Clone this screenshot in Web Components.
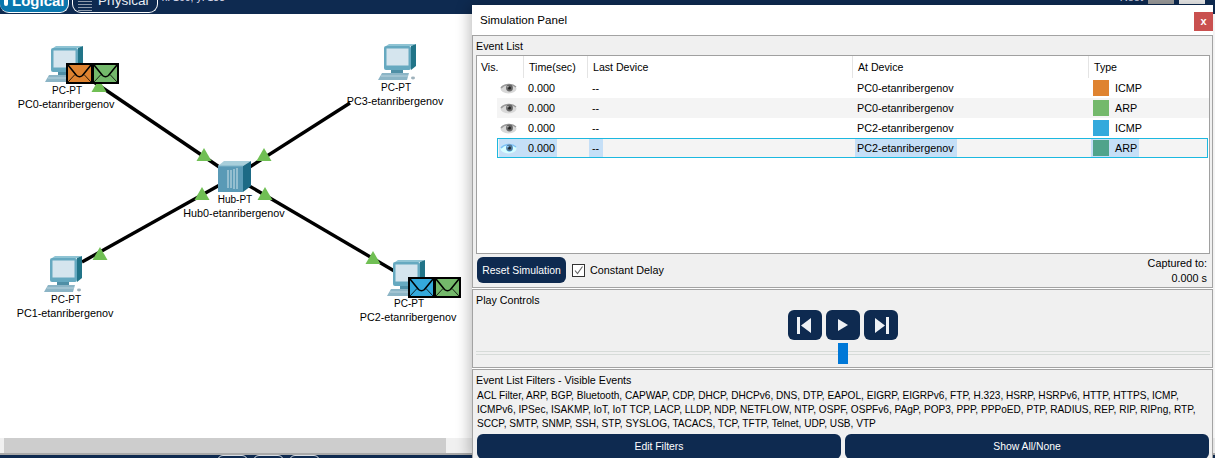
<!DOCTYPE html>
<html>
<head>
<meta charset="utf-8">
<title>Simulation Panel</title>
<style>
  html, body { margin: 0; height: 100%; overflow: hidden; background: #fff; }
  body { font: 10.8px "Liberation Sans", Arial, sans-serif; color: #000; }
</style>
</head>
<body>
<pt-app>
  <pt-topbar slot="top"></pt-topbar>
  <pt-workspace slot="main">
    <pdu-link></pdu-link>
    <pt-node kind="pc" x="45" y="46" cx="66" model="PC-PT" label="PC0-etanribergenov" ly="85"></pt-node>
    <pt-node kind="pc" x="378" y="44" cx="395" model="PC-PT" label="PC3-etanribergenov" ly="82"></pt-node>
    <pt-node kind="pc" x="44" y="256" cx="65" model="PC-PT" label="PC1-etanribergenov" ly="294"></pt-node>
    <pt-node kind="pc" x="387" y="260" cx="408" model="PC-PT" label="PC2-etanribergenov" ly="298"></pt-node>
    <pt-node kind="hub" x="218" y="161" cx="234" model="Hub-PT" label="Hub0-etanribergenov" ly="194"></pt-node>
    <pdu-mails x="66" y="63" colors="#df8330,#74b96b"></pdu-mails>
    <pdu-mails x="408" y="277" colors="#34a9dc,#74b96b"></pdu-mails>
  </pt-workspace>
  <pt-bottombar slot="bottom"></pt-bottombar>
  <sim-panel slot="panel">
    <panel-section heading="Event List" style="height:253px">
      <event-table>
        <event-row time="0.000" last="--" at="PC0-etanribergenov" type="ICMP" color="#df8330"></event-row>
        <event-row time="0.000" last="--" at="PC0-etanribergenov" type="ARP" color="#74b96b" alt></event-row>
        <event-row time="0.000" last="--" at="PC2-etanribergenov" type="ICMP" color="#34a9dc"></event-row>
        <event-row time="0.000" last="--" at="PC2-etanribergenov" type="ARP" color="#50a38b" alt selected></event-row>
      </event-table>
      <sim-toolbar></sim-toolbar>
    </panel-section>
    <panel-section heading="Play Controls" style="height:79px">
      <play-controls></play-controls>
    </panel-section>
    <panel-section heading="Event List Filters - Visible Events" style="height:90px">
      <event-filters>ACL Filter, ARP, BGP, Bluetooth, CAPWAP, CDP, DHCP, DHCPv6, DNS, DTP, EAPOL, EIGRP, EIGRPv6, FTP, H.323, HSRP, HSRPv6, HTTP, HTTPS, ICMP, ICMPv6, IPSec, ISAKMP, IoT, IoT TCP, LACP, LLDP, NDP, NETFLOW, NTP, OSPF, OSPFv6, PAgP, POP3, PPP, PPPoED, PTP, RADIUS, REP, RIP, RIPng, RTP, SCCP, SMTP, SNMP, SSH, STP, SYSLOG, TACACS, TCP, TFTP, Telnet, UDP, USB, VTP</event-filters>
    </panel-section>
  </sim-panel>
</pt-app>

<script>
const NAVY = '#0e2a50';

const define = (name, html, init) => {
  const template = document.createElement('template');
  template.innerHTML = html;
  customElements.define(name, class extends HTMLElement {
    constructor() {
      super();
      this.attachShadow({mode: 'open'});
      this.shadowRoot.appendChild(template.content.cloneNode(true));
    }
    connectedCallback() {
      if (init) init(this, this.shadowRoot);
    }
  });
};

define('pt-app', `
  <style>
    :host { display: grid; grid-template-rows: 14px 441px 3px; height: 458px; width: 1215px; position: relative; overflow: hidden; }
  </style>
  <slot name="top"></slot>
  <slot name="main"></slot>
  <slot name="bottom"></slot>
  <slot name="panel"></slot>
`);

define('pt-topbar', `
  <style>
    :host { display: flex; height: 14px; background: ${NAVY}; overflow: hidden; align-items: flex-start; }
    .tab { box-sizing: border-box; height: 13px; display: flex; align-items: flex-start; border: 1px solid #fff; border-top: 0; border-radius: 0 0 9px 9px; color: #fff; }
    .tab span { line-height: 15px; margin-top: -7px; white-space: nowrap; }
    .logical { width: 69px; background: #0a76ad; border-left: 0; font-weight: bold; font-size: 15px; padding-left: 4px; margin-right: 3px; }
    .dot { width: 4px; height: 6px; border-radius: 0 0 2px 2px; background: #fff; margin-right: 4px; flex: none; }
    .physical { width: 86px; padding-left: 5px; color: #e8edf3; font-size: 13.6px; }
    .physical svg { flex: none; margin-right: 6px; }
    .xy { color: #dde; font-size: 10.5px; line-height: 11px; margin: -8px 0 0 4px; white-space: nowrap; }
    .fill { flex: 1; }
    .root { color: #dde; font-size: 11px; line-height: 11px; margin-top: -8px; }
    .grey { width: 26px; height: 4px; background: #9a9a9a; margin-left: 5px; }
    .white { width: 26px; height: 4px; background: #e8e8e8; margin: 0 10px 0 5px; }
  </style>
  <div class="tab logical"><i class="dot"></i><span>Logical</span></div>
  <div class="tab physical">
    <svg width="14" height="12" viewBox="0 0 14 12"><path d="M0 1.5H14M0 4.5H14M0 7.5H14M0 10.5H14" stroke="#8d9aab" stroke-width="1.2"/></svg>
    <span>Physical</span>
  </div>
  <div class="xy">x: 160, y: 188</div>
  <div class="fill"></div>
  <div class="root">Root</div>
  <div class="grey"></div>
  <div class="white"></div>
`);

define('pt-bottombar', `
  <style>
    :host { display: flex; background: ${NAVY}; height: 3px; overflow: hidden; padding-left: 217px; gap: 5px; }
    i { box-sizing: border-box; width: 31px; height: 8px; border: 1px solid #d8dde4; border-radius: 6px 6px 0 0; }
  </style>
  <i></i><i></i><i></i>
`);

define('pt-workspace', `
  <style>
    :host { display: flex; flex-direction: column; height: 441px; }
    .stage { flex: 1; position: relative; overflow: hidden; background: #fff; }
    .bar { height: 15px; background: #f0f0f0; flex: none; padding-left: 4px; }
    .thumb { width: 442px; height: 15px; background: #cdcdcd; }
    .rule { height: 2px; background: #a9a9a9; flex: none; }
  </style>
  <div class="stage"><slot></slot></div>
  <div class="bar"><div class="thumb"></div></div>
  <div class="rule"></div>
`);

// links and link lights, coordinates are page coordinates (stage starts at y=14)
const tri = (x, y) => `<path d="M${x} ${y}l7.5 13h-15z" fill="#70bf54"/>`;
define('pdu-link', `
  <style>
    :host { position: absolute; left: 0; top: 0; }
    svg { display: block; }
  </style>
  <svg width="472" height="424" viewBox="0 14 472 424">
    <g stroke="#000" stroke-width="3.4" fill="none">
      <path d="M60 59 234 177"/>
      <path d="M350 103 234 177"/>
      <path d="M82 262 234 177"/>
      <path d="M396 272 234 177"/>
    </g>
    ${tri(99, 79)}${tri(204, 148)}${tri(264, 148)}${tri(202, 187)}${tri(265, 187)}${tri(100, 247)}${tri(373, 251)}
  </svg>
`);

const PC_ICON = `
  <svg width="40" height="38" viewBox="0 0 40 38">
    <path d="M8 2 11 0H38L33 2Z" fill="#8fc4d4"/>
    <path d="M33 2 38 0V22L33 26Z" fill="#217488"/>
    <rect x="6" y="2" width="27" height="24" rx="2" fill="#66a9c0"/>
    <rect x="8.5" y="4.5" width="22" height="17" fill="#d5e5ee"/>
    <rect x="13" y="26" width="12" height="3" fill="#4f8fa6"/>
    <path d="M4 29H31L29 36H0Z" fill="#8cb5c6"/>
    <path d="M3 32H30" stroke="#b9d3de"/>
    <ellipse cx="35" cy="34" rx="2" ry="1.4" fill="#9fb2bc"/>
  </svg>`;
const HUB_ICON = `
  <svg width="33" height="31" viewBox="0 0 33 31">
    <path d="M0 5 6 0H33L25 5Z" fill="#a9cfdb"/>
    <path d="M25 5 33 0V25L25 31Z" fill="#1d6a85"/>
    <rect x="0" y="5" width="25" height="26" fill="#5a9ab6"/>
    <path d="M10 9V27M13 9V27M16 8V28M19 7V28" stroke="#cfe3ea" stroke-width="1"/>
    <path d="M0 5H25" stroke="#7fb4c8"/>
  </svg>`;

define('pt-node', `
  <style>
    :host { display: contents; }
    .icon { position: absolute; line-height: 0; }
    .text { position: absolute; transform: translateX(-50%); text-align: center; white-space: nowrap; line-height: 14px; color: #000; }
    .model { font-size: 10px; padding-left: 2px; }
    .name { margin-top: -1px; }
  </style>
  <div class="icon"></div>
  <div class="text"><div class="model"></div><div class="name"></div></div>
`, (el, root) => {
  const icon = root.querySelector('.icon');
  icon.innerHTML = el.getAttribute('kind') === 'hub' ? HUB_ICON : PC_ICON;
  icon.style.left = el.getAttribute('x') + 'px';
  icon.style.top = (el.getAttribute('y') - 14) + 'px';
  const text = root.querySelector('.text');
  text.style.left = el.getAttribute('cx') + 'px';
  text.style.top = (el.getAttribute('ly') - 14 - 1) + 'px';
  root.querySelector('.model').textContent = el.getAttribute('model');
  root.querySelector('.name').textContent = el.getAttribute('label');
});

const mail = color => `
  <svg width="27" height="21" viewBox="0 0 27 21">
    <rect x="1" y="1" width="25" height="19" fill="${color}" stroke="#000" stroke-width="2"/>
    <path d="M2 2 10.5 12.5Q13.5 15 16.5 12.5L25 2" fill="none" stroke="#000" stroke-width="1.6"/>
    <path d="M2 19 9 11.5M25 19 18 11.5" fill="none" stroke="#000" stroke-width=".8"/>
  </svg>`;

define('pdu-mails', `
  <style>
    :host { position: absolute; display: flex; }
    svg { display: block; margin-right: -1px; }
  </style>
`, (el, root) => {
  el.style.left = el.getAttribute('x') + 'px';
  el.style.top = (el.getAttribute('y') - 14) + 'px';
  el.getAttribute('colors').split(',').forEach(c => {
    root.appendChild(document.createRange().createContextualFragment(mail(c)));
  });
});

define('sim-panel', `
  <style>
    :host { position: absolute; left: 472px; top: 5px; width: 741px; height: 453px; background: #fff; box-shadow: -4px 0 12px rgba(0,0,0,.22); display: flex; flex-direction: column; }
    .title { box-sizing: border-box; height: 30px; flex: none; display: flex; align-items: center; justify-content: space-between; padding: 0 0 2px 8px; font-size: 11.6px; }
    .close { width: 19px; height: 19px; margin: 5px 0 0 0; background: #c9504f; color: #fff; font-weight: bold; font-size: 11px; line-height: 18px; text-align: center; }
    .body { display: flex; flex-direction: column; gap: 1px; }
  </style>
  <div class="title"><span>Simulation Panel</span><span class="close">x</span></div>
  <div class="body"><slot></slot></div>
`);

define('panel-section', `
  <style>
    :host { display: block; box-sizing: border-box; background: #f0f0f0; border: 1px solid #a3a3a3; padding: 4px 2px 0 3px; overflow: hidden; }
    .head { font-size: 10.7px; line-height: 13px; height: 15px; }
  </style>
  <div class="head"></div>
  <slot></slot>
`, (el, root) => {
  root.querySelector('.head').textContent = el.getAttribute('heading');
});

define('event-table', `
  <style>
    :host { display: block; box-sizing: border-box; height: 199px; background: #fff; border: 1px solid #a0a0a0; }
    .head { display: grid; grid-template-columns: 47px 64px 265px 236px 1fr; height: 22px; font-size: 10.6px; }
    .head div { border-right: 1px solid #e4e4e4; padding: 5px 0 0 5px; line-height: 13px; }
    .head div:first-child { padding-left: 4px; }
    .head div:last-child { border-right: 0; }
  </style>
  <div class="head"><div>Vis.</div><div>Time(sec)</div><div>Last Device</div><div>At Device</div><div>Type</div></div>
  <slot></slot>
`);

define('event-row', `
  <style>
    :host { display: grid; grid-template-columns: 27px 64px 265px 236px 1fr; height: 20px; margin-left: 20px; line-height: 20px; position: relative; }
    :host([alt]) { background: #f4f4f4; }
    :host([selected]) { outline: 1px solid #1cb8e0; outline-offset: -1px; margin-right: 1px; }
    .cell { display: flex; align-items: center; height: 20px; width: max-content; }
    :host([selected]) .cell { background: #c5dff7; }
    .eye { margin-left: 2px; padding-left: 1px; width: 24px; }
    .eye svg { filter: blur(.35px); }
    :host([selected]) .eye svg { filter: blur(.35px) sepia(.8) hue-rotate(165deg) saturate(2); }
    .time { padding: 0 2px 0 4px; }
    .last { margin-left: 1px; padding: 0 4px 0 3px; }
    .at { margin-left: 2px; padding: 0 3px 0 2px; }
    .type { margin-left: 2px; padding: 0 2px; gap: 6px; }
    .swatch { width: 16px; height: 16px; }
  </style>
  <div class="cell eye">
    <svg width="17" height="11" viewBox="0 0 17 11">
      <ellipse cx="8.5" cy="5.7" rx="8" ry="4.8" fill="#d8d8d8"/>
      <path d="M1 5C4 1 12 0 16 4" fill="none" stroke="#999" stroke-width="1.4"/>
      <circle cx="9.5" cy="5" r="3.4" fill="#666"/>
      <circle cx="9.5" cy="5" r="1.5" fill="#222"/>
      <circle cx="7.9" cy="3.8" r=".8" fill="#bbb"/>
    </svg>
  </div>
  <div><div class="cell time"></div></div>
  <div><div class="cell last"></div></div>
  <div><div class="cell at"></div></div>
  <div><div class="cell type"><i class="swatch"></i><span></span></div></div>
`, (el, root) => {
  root.querySelector('.time').textContent = el.getAttribute('time');
  root.querySelector('.last').textContent = el.getAttribute('last');
  root.querySelector('.at').textContent = el.getAttribute('at');
  root.querySelector('.type span').textContent = el.getAttribute('type');
  root.querySelector('.swatch').style.background = el.getAttribute('color');
});

define('navy-button', `
  <style>
    :host { display: flex; align-items: center; justify-content: center; box-sizing: border-box; background: ${NAVY}; color: #fff; border-radius: 6px; }
  </style>
  <slot></slot>
`);

define('sim-toolbar', `
  <style>
    :host { display: flex; align-items: flex-start; margin-top: 3px; padding-left: 1px; }
    navy-button { width: 89px; height: 26px; font-size: 10.4px; }
    .check { display: flex; align-items: center; height: 26px; margin-left: 6px; gap: 5px; }
    .box { box-sizing: border-box; width: 13px; height: 13px; border: 1px solid #333; background: #fff; display: block; }
    .fill { flex: 1; }
    .cap { text-align: right; line-height: 15px; margin: -1px 3px 0 0; }
  </style>
  <navy-button>Reset Simulation</navy-button>
  <label class="check">
    <svg class="box" viewBox="0 0 11 11"><path d="M2 5.5 4.5 8.5 9.5 1.5" fill="none" stroke="#666" stroke-width="1.1"/></svg>
    <span>Constant Delay</span>
  </label>
  <div class="fill"></div>
  <div class="cap">Captured to:<br>0.000 s</div>
`);

define('play-controls', `
  <style>
    :host { display: block; }
    .btns { display: flex; justify-content: center; gap: 4px; margin-top: 1px; }
    navy-button { width: 34px; height: 30px; }
    svg { display: block; }
    .slider { position: relative; height: 21px; margin-top: 3px; }
    .groove { position: absolute; left: 0; right: 0; top: 8px; height: 4px; box-sizing: border-box; border: 1px solid #d6dbd8; border-width: 1px 0; }
    .thumb { position: absolute; left: 362px; top: 0; width: 10px; height: 21px; background: #0078d7; }
  </style>
  <div class="btns">
    <navy-button><svg width="16" height="17" viewBox="0 0 16 17"><path d="M0 0H3V17H0ZM14 1V16L4 8.5Z" fill="#eef1f5"/></svg></navy-button>
    <navy-button><svg width="10" height="12" viewBox="0 0 10 12"><path d="M0 0 10 6 0 12Z" fill="#eef1f5"/></svg></navy-button>
    <navy-button><svg width="16" height="17" viewBox="0 0 16 17"><path d="M16 0H13V17H16ZM2 1V16L12 8.5Z" fill="#eef1f5"/></svg></navy-button>
  </div>
  <div class="slider"><div class="groove"></div><div class="thumb"></div></div>
`);

define('event-filters', `
  <style>
    :host { display: block; }
    .list { line-height: 14px; font-size: 10.1px; margin: 0 0 0 1px; height: 45px; }
    .btns { display: flex; gap: 4px; padding: 0 1px; }
    navy-button { flex: 1; height: 25px; font-size: 10.4px; }
  </style>
  <div class="list"><slot></slot></div>
  <div class="btns"><navy-button>Edit Filters</navy-button><navy-button>Show All/None</navy-button></div>
`);
</script>
</body>
</html>
